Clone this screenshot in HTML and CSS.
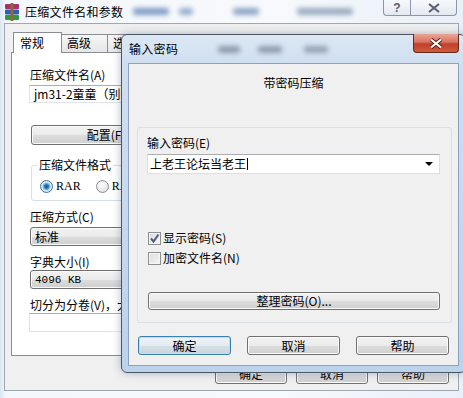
FILE: index.html
```html
<!DOCTYPE html>
<html lang="zh-CN">
<head>
    <meta charset="UTF-8">
    <meta name="viewport" content="width=device-width, initial-scale=1.0">
    <title>压缩文件名和参数</title>
    <link rel="stylesheet" href="styles.css">
</head>
<body>

<div class="screen">
    <div class="window main-win">
        <div class="titlebar">
            <svg class="app-icon" width="16" height="18" viewBox="0 0 16 18">
                <rect x="1" y="1" width="14" height="5" rx="1" fill="#a8306c"/>
                <rect x="1" y="6.5" width="14" height="5" rx="1" fill="#2c5fb6"/>
                <rect x="1" y="12" width="14" height="5" rx="1" fill="#2f9a3c"/>
                <rect x="6.5" y="0" width="3" height="18" fill="#8c6a38"/>
            </svg>
            <span class="title">压缩文件名和参数</span>
            <span class="haze haze-a"></span>
            <span class="haze haze-b"></span>
            <span class="haze haze-c"></span>
            <span class="haze haze-d"></span>
            <div class="caption">
                <span class="cap-btn cap-help">?</span>
                <span class="cap-btn cap-close">
                    <svg width="12" height="10" viewBox="0 0 12 10"><path d="M1 1 L11 9 M11 1 L1 9" stroke="#5a6270" stroke-width="2.2"/></svg>
                </span>
            </div>
        </div>

        <div class="client">
            <div class="tabs">
                <span class="tab active">常规</span>
                <span class="tab">高级</span>
                <span class="tab">选项</span>
                <span class="tab">文件</span>
            </div>
            <div class="tab-page">
                <div class="label">压缩文件名(A)</div>
                <div class="textbox name-box">jm31-2童童（别名）.rar</div>
                <div class="button conf-btn">配置(F)...</div>
                <fieldset class="fmt-group">
                    <legend>压缩文件格式</legend>
                    <div class="radios">
                        <span class="radio-item"><span class="radio on"></span>RAR</span>
                        <span class="radio-item"><span class="radio"></span>RAR5</span>
                        <span class="radio-item"><span class="radio"></span>ZIP</span>
                    </div>
                </fieldset>
                <div class="label gap">压缩方式(C)</div>
                <div class="button combo">标准</div>
                <div class="label gap">字典大小(I)</div>
                <div class="button combo dict">4096 KB</div>
                <div class="label gap">切分为分卷(V)，大小</div>
                <div class="textbox vol-box"></div>
            </div>
            <div class="actions">
                <span class="button act-btn">确定</span>
                <span class="button act-btn">取消</span>
                <span class="button act-btn">帮助</span>
            </div>
        </div>
    </div>

    <div class="window dlg">
        <div class="dlg-titlebar">
            <span class="title">输入密码</span>
            <span class="haze haze-e"></span>
            <span class="haze haze-f"></span>
            <span class="haze haze-g"></span>
            <span class="dlg-close">
                <svg width="14" height="11" viewBox="0 0 14 11"><path d="M2 1.5 L12 9.5 M12 1.5 L2 9.5" stroke="#5b1a10" stroke-width="4"/><path d="M2 1.5 L12 9.5 M12 1.5 L2 9.5" stroke="#fff" stroke-width="2.2"/></svg>
            </span>
        </div>
        <div class="dlg-client">
            <div class="dlg-head">带密码压缩</div>
            <div class="pw-group">
                <div class="label">输入密码(E)</div>
                <div class="pw-combo">
                    <span>上老王论坛当老王<span class="caret"></span></span>
                    <span class="arrow"></span>
                </div>
                <div class="check-row first"><span class="check on">
                    <svg width="11" height="11" viewBox="0 0 11 11"><path d="M2 5.5 L4.5 8.5 L9.5 1.5" stroke="#4a5d8c" stroke-width="2" fill="none"/></svg>
                </span>显示密码(S)</div>
                <div class="check-row"><span class="check"></span>加密文件名(N)</div>
                <div class="button manage-btn">整理密码(O)...</div>
            </div>
            <div class="dlg-actions">
                <span class="button dlg-btn focus">确定</span>
                <span class="button dlg-btn">取消</span>
                <span class="button dlg-btn">帮助</span>
            </div>
        </div>
    </div>
</div>

</body>
</html>
```

FILE: styles.css
```css
body {
    margin: 0;
    font-family: "Noto Sans CJK SC", "Noto Sans", sans-serif;
    font-size: 12px;
    line-height: 14px;
    color: #000;
}

.screen {
    position: relative;
    width: 463px;
    height: 398px;
    overflow: hidden;
    background: #eef3f9;
}

/* outer WinRAR window */
.main-win {
    box-sizing: border-box;
    width: 463px;
    height: 398px;
    padding: 0 4px 7px 4px;
    background: linear-gradient(to right, #dbe6f3 0, #f4f8fc 6px, #f7f9fc 60%, #e9f0f8 100%);
}

.titlebar {
    position: relative;
    display: flex;
    align-items: center;
    height: 23px;
}

.app-icon {
    flex: none;
}

.title {
    margin-left: 5px;
    font-size: 12px;
    letter-spacing: 0.3px;
    white-space: nowrap;
}

.haze {
    display: block;
    height: 7px;
    border-radius: 3px;
    filter: blur(2.5px);
    flex: none;
}

.haze-a { width: 36px; margin-left: 10px; background: #7f9cc6; }
.haze-b { width: 14px; margin-left: 10px; background: #96aed0; }
.haze-c { width: 26px; margin-left: 40px; background: #8da6c6; }
.haze-d { width: 56px; margin-left: 38px; background: #9aaac0; }

.caption {
    position: absolute;
    top: 0;
    right: 2px;
    display: flex;
}

.cap-btn {
    box-sizing: border-box;
    height: 16px;
    display: flex;
    align-items: center;
    justify-content: center;
    border: 1px solid #8d96a4;
    border-top: none;
    background: linear-gradient(#f7f9fc, #e3e9f1);
    color: #555d6b;
    font-family: "Liberation Sans", sans-serif;
    font-size: 12px;
    line-height: 14px;
    font-weight: bold;
}

.cap-help {
    width: 27px;
    border-radius: 0 0 0 4px;
    border-right: none;
}

.cap-close {
    width: 47px;
    border-radius: 0 0 4px 0;
}

.client {
    box-sizing: border-box;
    height: 368px;
    padding: 8px 0 0 6px;
    border: 1px solid #9ea7b3;
    background: #f0f0f0;
}

/* tabs */
.tabs {
    display: flex;
    align-items: flex-end;
    height: 21px;
    margin-left: 2px;
}

.tab {
    box-sizing: border-box;
    width: 46px;
    height: 18px;
    margin-bottom: 1px;
    padding: 1px 0 0 5px;
    border: 1px solid #898c95;
    border-bottom: none;
    border-left: none;
    background: linear-gradient(#f6f6f6, #e6e6e6);
    white-space: nowrap;
}

.tab.active {
    position: relative;
    z-index: 1;
    width: 49px;
    height: 21px;
    margin-bottom: 0;
    padding: 3px 0 0 6px;
    border-left: 1px solid #898c95;
    background: #fff;
}

.tab-page {
    box-sizing: border-box;
    width: 441px;
    height: 304px;
    margin-top: -1px;
    padding: 15px 0 0 18px;
    border: 1px solid #898c95;
    background: #fff;
}

.label {
    height: 14px;
    white-space: nowrap;
}

.label.gap {
    margin-top: 9px;
}

.textbox {
    box-sizing: border-box;
    width: 240px;
    margin-left: -1px;
    padding-left: 4px;
    border: 1px solid #e2e3ea;
    border-top-color: #abadb3;
    background: #fff;
    white-space: nowrap;
    overflow: hidden;
}

.name-box {
    height: 18px;
    margin-top: 3px;
    line-height: 16px;
}

.vol-box {
    height: 19px;
    margin-top: 1px;
}

.button {
    box-sizing: border-box;
    display: flex;
    align-items: center;
    justify-content: center;
    border: 1px solid #707070;
    border-radius: 3px;
    background: linear-gradient(#f2f2f2 0%, #ebebeb 50%, #dddddd 51%, #cfcfcf 100%);
    box-shadow: inset 0 0 0 1px #fbfbfb;
    white-space: nowrap;
}

.conf-btn {
    width: 160px;
    height: 20px;
    margin: 22px 0 0 1px;
}

.fmt-group {
    box-sizing: border-box;
    width: 230px;
    margin: 13px 0 0 1px;
    padding: 7px 0 7px 8px;
    border: 1px solid #d5dfe5;
    border-radius: 3px;
}

.fmt-group legend {
    margin-left: -3px;
    padding: 0 2px;
    line-height: 14px;
}

.radios {
    display: flex;
    gap: 15px;
    height: 14px;
    align-items: center;
}

.radio-item {
    display: flex;
    align-items: center;
    gap: 3px;
    font-family: "Liberation Serif", serif;
    font-size: 12px;
}

.radio {
    box-sizing: border-box;
    width: 13px;
    height: 13px;
    border-radius: 50%;
    border: 1px solid #8b8f96;
    background: radial-gradient(circle at 40% 35%, #ffffff 0, #e8e8e8 60%, #cfd3d8 100%);
}

.radio.on {
    border-color: #3d6f99;
    background: radial-gradient(circle, #1b4c7a 0, #2f7fbf 2px, #7fc4ef 3.5px, #e6eef5 4.5px, #c6d0da 100%);
}

.combo {
    width: 240px;
    height: 19px;
    margin-top: 3px;
    justify-content: flex-start;
    padding-left: 4px;
}

.dict {
    margin-top: 1px;
    font-family: "Liberation Mono", monospace;
    font-size: 11px;
}

.actions {
    display: flex;
    justify-content: flex-end;
    gap: 9px;
    margin-top: 8px;
    padding-right: 9px;
}

.act-btn {
    width: 72px;
    height: 20px;
}

/* password dialog */
.dlg {
    position: absolute;
    left: 121px;
    top: 34px;
    box-sizing: border-box;
    width: 345px;
    height: 339px;
    padding: 0 6px 6px 6px;
    border: 1px solid #4a5565;
    border-radius: 6px;
    background: linear-gradient(#dce7f3 0, #cfdff0 30px, #bcd3ec 100%);
    box-shadow: 0 0 8px rgba(40, 60, 90, 0.35);
}

.dlg-titlebar {
    position: relative;
    display: flex;
    align-items: center;
    height: 28px;
    padding-left: 1px;
}

.dlg-titlebar .title {
    margin-left: 0;
}

.haze-e { width: 22px; margin-left: 40px; background: #8d9aab; }
.haze-f { width: 24px; margin-left: 18px; background: #8e9cae; }
.haze-g { width: 24px; margin-left: 22px; background: #95a2b3; }

.dlg-close {
    position: absolute;
    top: -1px;
    right: 0;
    box-sizing: border-box;
    width: 46px;
    height: 19px;
    display: flex;
    align-items: center;
    justify-content: center;
    border: 1px solid #5e2a22;
    border-top: none;
    border-radius: 0 0 4px 4px;
    background: linear-gradient(#e9a696 0%, #d9735e 45%, #c4402a 55%, #d05a3c 100%);
}

.dlg-client {
    box-sizing: border-box;
    height: 303px;
    border: 1px solid #8aa2bf;
    background: #f0f0f0;
}

.dlg-head {
    padding-top: 12px;
    text-align: center;
}

.pw-group {
    box-sizing: border-box;
    width: 315px;
    height: 196px;
    margin: 37px 0 0 8px;
    padding: 8px 0 0 9px;
    border: 1px solid #d9dfe4;
    border-radius: 3px;
}

.pw-combo {
    box-sizing: border-box;
    display: flex;
    align-items: center;
    justify-content: space-between;
    width: 293px;
    height: 20px;
    margin-top: 4px;
    padding: 0 6px 0 2px;
    border: 1px solid #dbdfe6;
    border-top-color: #abadb3;
    background: #fff;
}

.caret {
    display: inline-block;
    width: 1px;
    height: 12px;
    margin-left: 1px;
    vertical-align: -1px;
    background: #000;
}

.arrow {
    width: 0;
    height: 0;
    border-left: 4px solid transparent;
    border-right: 4px solid transparent;
    border-top: 4px solid #000;
}

.check-row {
    display: flex;
    align-items: center;
    gap: 2px;
    height: 14px;
    margin-top: 6px;
    padding-left: 1px;
}

.check-row.first {
    margin-top: 57px;
}

.check {
    box-sizing: border-box;
    display: flex;
    align-items: center;
    justify-content: center;
    width: 13px;
    height: 13px;
    border: 1px solid #8e8f8f;
    background: linear-gradient(135deg, #dcdcdc, #f6f6f6);
    box-shadow: inset 0 0 0 1px #f4f4f4;
}

.manage-btn {
    width: 292px;
    height: 18px;
    margin: 27px 0 0 1px;
}

.dlg-actions {
    display: flex;
    gap: 16px;
    margin-top: 13px;
    padding-left: 9px;
}

.dlg-btn {
    width: 93px;
    height: 19px;
}

.dlg-btn.focus {
    border-color: #3c7fb1;
    box-shadow: inset 0 0 0 1px #b6e0f7;
    background: linear-gradient(#eef4f8 0%, #e4ecf1 50%, #d6e0e6 51%, #c9d5dd 100%);
}
```
